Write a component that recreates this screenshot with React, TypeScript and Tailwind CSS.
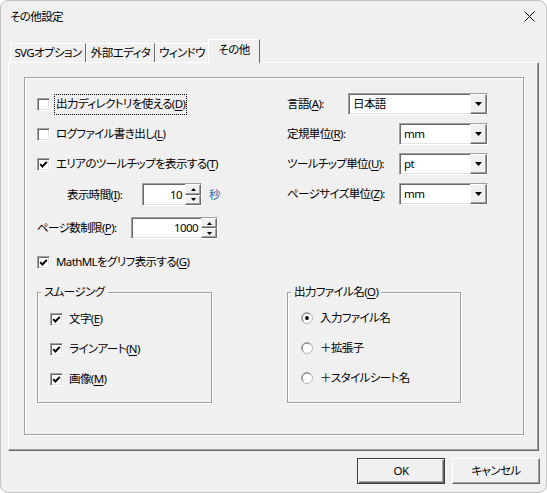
import { ReactNode } from 'react'

const sunken =
  'bg-white border border-t-[#a0a0a0] border-l-[#a0a0a0] border-r-white border-b-white shadow-[inset_1px_1px_0_#696969,inset_-1px_-1px_0_#e3e3e3]'
const raised =
  'bg-[#f0f0f0] border border-t-white border-l-white border-r-[#696969] border-b-[#696969] shadow-[inset_-1px_-1px_0_#a0a0a0]'

function Acc({ text, k, tail = '' }: { text: string; k: string; tail?: string }) {
  return (
    <span className="whitespace-nowrap">
      {text}(<u className="underline-offset-[2px]">{k}</u>){tail}
    </span>
  )
}

function CheckBox({ checked }: { checked?: boolean }) {
  return (
    <span
      className={`w-[13px] h-[13px] shrink-0 flex items-center justify-center ${sunken}`}
    >
      {checked && (
        <svg width="9" height="9" viewBox="0 0 9 9">
          <path d="M1.2 4.2 L3.4 6.5 L7.8 1.8" stroke="#000" strokeWidth="1.9" fill="none" />
        </svg>
      )}
    </span>
  )
}

function Check({ checked, focus, children }: { checked?: boolean; focus?: boolean; children: ReactNode }) {
  return (
    <div className="h-[22px] flex items-center">
      <CheckBox checked={checked} />
      <span
        className={`ml-[4px] h-[21px] px-[1px] flex items-center border ${
          focus ? 'border-dotted border-black' : 'border-transparent'
        }`}
      >
        {children}
      </span>
    </div>
  )
}

function Radio({ on, children }: { on?: boolean; children: ReactNode }) {
  return (
    <div className="h-[22px] flex items-center">
      <svg width="12" height="12" viewBox="0 0 12 12" className="shrink-0">
        <circle cx="6" cy="6" r="5.5" fill="#fff" stroke="#b4b4b4" />
        <path d="M2.5 9.2 A4.6 4.6 0 0 1 9.2 2.5" stroke="#7a7a7a" fill="none" />
        {on && <circle cx="6" cy="6" r="1.9" fill="#000" />}
      </svg>
      <span className="ml-[7px]">{children}</span>
    </div>
  )
}

function Tri({ up }: { up?: boolean }) {
  return (
    <svg width="5" height="3" viewBox="0 0 5 3">
      <path d={up ? 'M0 3 L2.5 0 L5 3Z' : 'M0 0 L2.5 3 L5 0Z'} fill="#000" />
    </svg>
  )
}

function Spinner({ value, w, h }: { value: string; w: string; h: string }) {
  return (
    <div className={`${w} ${h} flex ${sunken}`}>
      <span className="flex-1 flex items-center justify-end pr-[3px]">{value}</span>
      <div className="w-[16px] flex flex-col">
        <div className={`flex-1 flex items-center justify-center ${raised}`}>
          <Tri up />
        </div>
        <div className={`flex-1 flex items-center justify-center ${raised}`}>
          <Tri />
        </div>
      </div>
    </div>
  )
}

function Combo({ value, w }: { value: string; w: string }) {
  return (
    <div className={`${w} h-[22px] flex ${sunken}`}>
      <span className="flex-1 flex items-center pl-[4px]">{value}</span>
      <div className={`w-[17px] flex items-center justify-center ${raised}`}>
        <svg width="7" height="4" viewBox="0 0 7 4">
          <path d="M0 0 L3.5 4 L7 0Z" fill="#000" />
        </svg>
      </div>
    </div>
  )
}

function Group({ title, w, children }: { title: ReactNode; w: string; children: ReactNode }) {
  return (
    <div
      className={`relative ${w} h-[111px] border border-[#a0a0a0] shadow-[1px_1px_0_#fff,inset_1px_1px_0_#fff]`}
    >
      <span className="absolute left-[3px] top-[-9px] h-[16px] px-[3px] flex items-center bg-[#f0f0f0]">
        {title}
      </span>
      {children}
    </div>
  )
}

export default function App() {
  return (
    <div className="w-[547px] h-[493px] bg-[#f0f0f0] border border-[#c2c2c2] rounded-[8px] overflow-hidden flex flex-col whitespace-nowrap text-[11.5px] tracking-[-0.6px] leading-none text-black font-['Noto_Sans','Noto_Sans_CJK_JP',sans-serif] [font-feature-settings:'palt']">
      {/* title bar */}
      <div className="h-[31px] shrink-0 flex items-center justify-between pl-[9px] pr-[11px]">
        <span>その他設定</span>
        <svg width="11" height="11" viewBox="0 0 11 11">
          <path d="M0.5 0.5 L10.5 10.5 M10.5 0.5 L0.5 10.5" stroke="#000" strokeWidth="1" />
        </svg>
      </div>

      <div className="ml-[7px] mt-[7px] w-[531px]">
        {/* tabs */}
        <div className="h-[23px] flex items-end pl-[2px]">
          <div className="w-[76px] h-[19px] flex items-center justify-center border-t border-l border-r border-t-white border-l-white border-r-[#696969]">
            SVGオプション
          </div>
          <div className="w-[69px] h-[19px] flex items-center justify-center border-t border-l border-r border-t-white border-l-white border-r-[#696969]">
            外部エディタ
          </div>
          <div className="w-[53px] h-[19px] flex items-center justify-center border-t border-l border-t-white border-l-white">
            ウィンドウ
          </div>
          <div className="relative z-10 -mb-px w-[52px] h-[24px] pb-[3px] flex items-center justify-center bg-[#f0f0f0] border-t border-l border-r border-t-white border-l-white border-r-[#696969]">
            その他
          </div>
        </div>

        {/* panel */}
        <div className="h-[389px] pl-[15px] pt-[14px] border border-t-white border-l-white border-r-[#696969] border-b-[#696969] shadow-[inset_-1px_-1px_0_#a0a0a0]">
          <div className="w-[500px] h-[358px] border border-[#a0a0a0] shadow-[1px_1px_0_#fff,inset_1px_1px_0_#fff]">
            <div className="flex">
              <div className="w-[262px] pl-[12px] pt-[15px] flex flex-col">
                <Check focus>
                  <Acc text="出力ディレクトリを使える" k="D" />
                </Check>
                <div className="mt-[8px]">
                  <Check>
                    <Acc text="ログファイル書き出し" k="L" />
                  </Check>
                </div>
                <div className="mt-[8px]">
                  <Check checked>
                    <Acc text="エリアのツールチップを表示する" k="T" />
                  </Check>
                </div>
                <div className="mt-[8px] h-[23px] flex items-center">
                  <span className="ml-[30px] w-[75px]">
                    <Acc text="表示時間" k="I" tail=":" />
                  </span>
                  <Spinner value="10" w="w-[60px]" h="h-[23px]" />
                  <span className="ml-[7px] text-[#2f63a6]">秒</span>
                </div>
                <div className="mt-[11px] h-[22px] flex items-center">
                  <span className="w-[94px]">
                    <Acc text="ページ数制限" k="P" tail=":" />
                  </span>
                  <Spinner value="1000" w="w-[87px]" h="h-[22px]" />
                </div>
                <div className="mt-[12px]">
                  <Check checked>
                    <Acc text="MathMLをグリフ表示する" k="G" />
                  </Check>
                </div>
              </div>

              <div className="pt-[15px] flex flex-col gap-[8px]">
                <div className="h-[22px] flex items-center">
                  <span className="w-[61px]">
                    <Acc text="言語" k="A" tail=":" />
                  </span>
                  <Combo value="日本語" w="w-[140px]" />
                </div>
                <div className="h-[22px] flex items-center">
                  <span className="w-[112px]">
                    <Acc text="定規単位" k="R" tail=":" />
                  </span>
                  <Combo value="mm" w="w-[89px]" />
                </div>
                <div className="h-[22px] flex items-center">
                  <span className="w-[112px]">
                    <Acc text="ツールチップ単位" k="U" tail=":" />
                  </span>
                  <Combo value="pt" w="w-[89px]" />
                </div>
                <div className="h-[22px] flex items-center">
                  <span className="w-[112px]">
                    <Acc text="ページサイズ単位" k="Z" tail=":" />
                  </span>
                  <Combo value="mm" w="w-[89px]" />
                </div>
              </div>
            </div>

            <div className="mt-[19px] pl-[12px] flex">
              <Group title="スムージング" w="w-[175px]">
                <div className="pt-[15px] pl-[12px] flex flex-col gap-[8px]">
                  <Check checked>
                    <Acc text="文字" k="E" />
                  </Check>
                  <Check checked>
                    <Acc text="ラインアート" k="N" />
                  </Check>
                  <Check checked>
                    <Acc text="画像" k="M" />
                  </Check>
                </div>
              </Group>
              <div className="ml-[75px]">
                <Group title={<Acc text="出力ファイル名" k="O" />} w="w-[174px]">
                  <div className="pt-[14px] pl-[13px] flex flex-col gap-[8px]">
                    <Radio on>入力ファイル名</Radio>
                    <Radio>＋拡張子</Radio>
                    <Radio>＋スタイルシート名</Radio>
                  </div>
                </Group>
              </div>
            </div>
          </div>
        </div>
      </div>

      {/* buttons */}
      <div className="mt-[7px] flex justify-end gap-[7px] pr-[6px]">
        <button className="w-[88px] h-[26px] flex items-center justify-center bg-[#f0f0f0] border border-[#3c3c3c] shadow-[inset_1px_1px_0_#fff,inset_-1px_-1px_0_#696969,inset_-2px_-2px_0_#a0a0a0]">
          OK
        </button>
        <button className={`w-[88px] h-[26px] flex items-center justify-center ${raised}`}>
          キャンセル
        </button>
      </div>
    </div>
  )
}
